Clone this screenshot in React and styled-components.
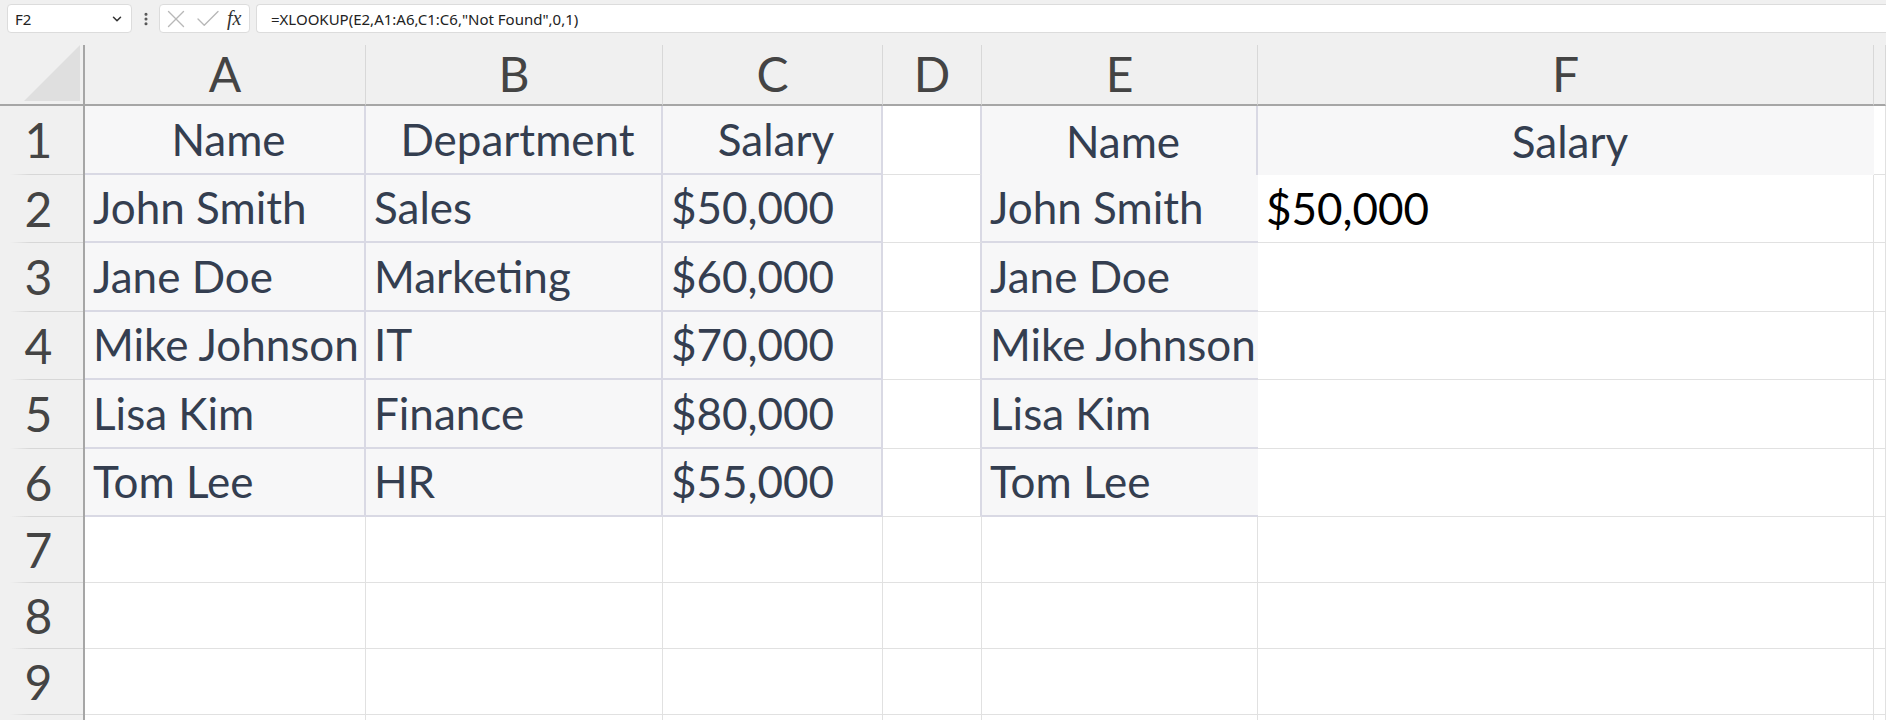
import React from 'react';
import styled, { createGlobalStyle } from 'styled-components';
import { ChevronDown, EllipsisVertical, X, Check } from 'lucide-react';

const COLORS = {
  chrome: '#f0f0f0',
  tableBg: '#f7f7f8',
  lavender: '#d9d9e4',
  grid: '#e1e1e1',
  headerLine: '#a6a6a6',
  ink: '#343e50',
  headInk: '#444444',
};

const COLUMNS = ['A', 'B', 'C', 'D', 'E', 'F', ''];
const TEMPLATE = '85px 281px 297px 220px 99px 276px 616px 1fr';

const PEOPLE = [
  ['John Smith', 'Sales', '$50,000'],
  ['Jane Doe', 'Marketing', '$60,000'],
  ['Mike Johnson', 'IT', '$70,000'],
  ['Lisa Kim', 'Finance', '$80,000'],
  ['Tom Lee', 'HR', '$55,000'],
];

// tone = background, right / bottom = which border the cell draws
const headerRow = [
  { text: 'Name', tone: 'table', right: 'lav', bottom: 'lav', align: 'center' },
  { text: 'Department', tone: 'table', right: 'lav', bottom: 'lav', align: 'center' },
  { text: 'Salary', tone: 'table', right: 'lav', bottom: 'lav', align: 'center' },
  { text: '', tone: 'plain', right: 'lav', bottom: 'grid' },
  { text: 'Name', tone: 'table', right: 'lav', bottom: 'none', align: 'center' },
  { text: 'Salary', tone: 'table', right: 'none', bottom: 'none', align: 'center' },
  { text: '', tone: 'plain', right: 'grid', bottom: 'grid' },
];

const dataRows = PEOPLE.map(([name, dept, salary], i) => [
  { text: name, tone: 'table', right: 'lav', bottom: 'lav' },
  { text: dept, tone: 'table', right: 'lav', bottom: 'lav' },
  { text: salary, tone: 'table', right: 'lav', bottom: 'lav' },
  { text: '', tone: 'plain', right: 'lav', bottom: 'grid' },
  { text: name, tone: 'table', right: 'none', bottom: 'lav' },
  { text: i === 0 ? '$50,000' : '', tone: 'plain', right: 'grid', bottom: 'grid', result: true },
  { text: '', tone: 'plain', right: 'grid', bottom: 'grid' },
]);

const emptyRow = () =>
  COLUMNS.map(() => ({ text: '', tone: 'plain', right: 'grid', bottom: 'grid' }));

const ROWS = [
  { label: '1', height: 68.5, cells: headerRow },
  ...dataRows.map((cells, i) => ({ label: String(i + 2), height: 68.5, cells })),
  { label: '7', height: 66, cells: emptyRow() },
  { label: '8', height: 66, cells: emptyRow() },
  { label: '9', height: 66, cells: emptyRow() },
  // the next row only peeks in under the bottom edge
  { label: '', height: 20, cells: emptyRow() },
];

const borderFor = kind => {
  if (kind === 'lav') return `2px solid ${COLORS.lavender}`;
  if (kind === 'grid') return `1px solid ${COLORS.grid}`;
  return '0';
};

function App() {
  return (
    <Page>
      <GlobalStyle />
      <FormulaBar>
        <NameBox>
          <span>F2</span>
          <ChevronDown size={14} strokeWidth={2.6} color="#333" />
        </NameBox>
        <Dots>
          <EllipsisVertical size={16} strokeWidth={2.6} color="#555" />
        </Dots>
        <FxBox>
          <X size={30} strokeWidth={1.1} color="#b8b8b8" />
          <Check size={30} strokeWidth={1.1} color="#b8b8b8" />
          <Fx>fx</Fx>
        </FxBox>
        <FormulaInput>=XLOOKUP(E2,A1:A6,C1:C6,"Not Found",0,1)</FormulaInput>
      </FormulaBar>

      <Sheet>
        <Corner>
          <svg width="56" height="56" viewBox="0 0 56 56">
            <polygon points="56,0 56,56 0,56" fill="#dfdfdf" />
          </svg>
        </Corner>
        {COLUMNS.map((letter, i) => (
          <ColHeader key={i}>{letter}</ColHeader>
        ))}

        {ROWS.map((row, r) => (
          <React.Fragment key={r}>
            <RowHeader style={{ height: row.height }}>{row.label}</RowHeader>
            {row.cells.map((cell, c) => (
              <Cell
                key={c}
                $tone={cell.tone}
                $right={cell.right}
                $bottom={cell.bottom}
                $align={cell.align}
                $result={cell.result}
              >
                {cell.text}
              </Cell>
            ))}
          </React.Fragment>
        ))}
      </Sheet>
    </Page>
  );
}

const GlobalStyle = createGlobalStyle`
  html, body {
    margin: 0;
    padding: 0;
    background: ${COLORS.chrome};
    overflow: hidden;
  }
  * {
    box-sizing: border-box;
  }
`;

const Page = styled.div`
  width: 1886px;
  height: 720px;
  overflow: hidden;
  background: ${COLORS.chrome};
`;

const FormulaBar = styled.div`
  display: flex;
  align-items: stretch;
  height: 33px;
  padding: 4px 0 0 7px;
  font-family: 'Noto Sans', 'Open Sans', sans-serif;
  font-size: 15px;
  color: #222;
`;

const Box = styled.div`
  display: flex;
  align-items: center;
  background: #ffffff;
  border: 1px solid #dcdcdc;
  border-radius: 4px;
`;

const NameBox = styled(Box)`
  width: 125px;
  justify-content: space-between;
  padding: 0 7px 0 7px;
`;

const Dots = styled.div`
  width: 27px;
  display: flex;
  align-items: center;
  justify-content: center;
`;

const FxBox = styled(Box)`
  width: 91px;
  padding: 0 4px 0 1px;
  gap: 2px;
`;

const Fx = styled.span`
  font-family: 'Liberation Serif', 'DejaVu Serif', serif;
  font-style: italic;
  font-size: 20px;
  color: #333;
  margin-left: 2px;
`;

const FormulaInput = styled(Box)`
  flex: 1;
  margin-left: 6px;
  padding-left: 14px;
  border-right: 0;
  border-radius: 4px 0 0 4px;
  white-space: nowrap;
`;

const Sheet = styled.div`
  display: grid;
  grid-template-columns: ${TEMPLATE};
  grid-auto-rows: auto;
  padding-top: 12px;
  background: ${COLORS.chrome};
`;

const Corner = styled.div`
  height: 61px;
  display: flex;
  align-items: flex-start;
  justify-content: flex-end;
  padding: 0 3px 0 0;
  border-right: 2px solid ${COLORS.headerLine};
  border-bottom: 2px solid ${COLORS.headerLine};
`;

const headFont = `
  font-family: Lato, 'Open Sans', sans-serif;
  font-size: 48px;
  color: ${COLORS.headInk};
`;

const ColHeader = styled.div`
  ${headFont}
  height: 61px;
  display: flex;
  align-items: center;
  justify-content: center;
  padding-bottom: 2px;
  background: ${COLORS.chrome};
  border-right: 1px solid #d8d8d8;
  border-bottom: 2px solid ${COLORS.headerLine};
  line-height: 1;
`;

const RowHeader = styled.div`
  ${headFont}
  position: relative;
  display: flex;
  align-items: center;
  justify-content: center;
  padding-right: 6px;
  line-height: 1;
  background: ${COLORS.chrome};
  border-right: 2px solid ${COLORS.headerLine};

  &::after {
    content: '';
    position: absolute;
    left: 0;
    right: 0;
    bottom: 0;
    height: 1px;
    background: linear-gradient(to right, rgba(215, 215, 215, 0) 10px, #d7d7d7 30px);
  }
`;

const Cell = styled.div`
  display: flex;
  align-items: flex-end;
  justify-content: ${p => (p.$align === 'center' ? 'center' : 'flex-start')};
  padding: 0 0 12px 8px;
  overflow: hidden;
  white-space: nowrap;
  font-family: Lato, 'Open Sans', sans-serif;
  font-size: 44px;
  line-height: 1;
  color: ${p => (p.$result ? '#000000' : COLORS.ink)};
  background: ${p => (p.$tone === 'table' ? COLORS.tableBg : '#ffffff')};
  border-right: ${p => borderFor(p.$right)};
  border-bottom: ${p => borderFor(p.$bottom)};
`;

export default App;
